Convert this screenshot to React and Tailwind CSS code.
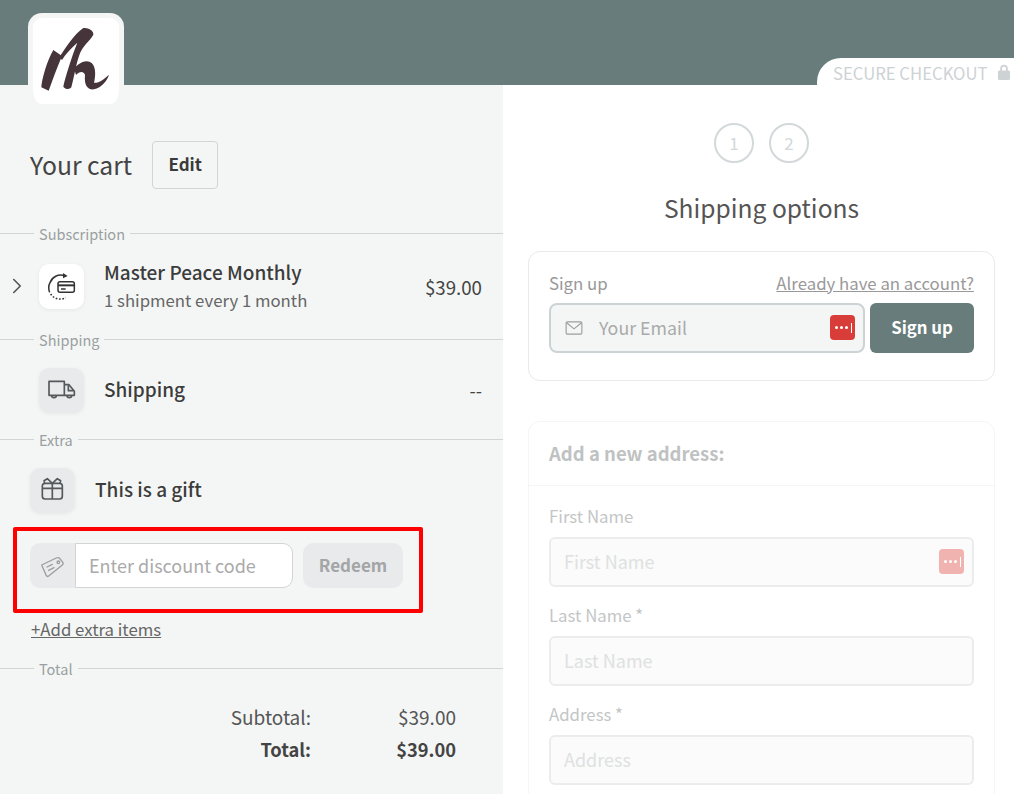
import { ChevronRight } from 'lucide-react';

const fontStack = { fontFamily: '"Noto Sans CJK JP", "Open Sans", sans-serif' };

function SectionLabel({ children }) {
  return (
    <div className="flex items-center h-[20px] text-[14.5px] leading-[20px] text-[#9a9fa1]">
      <div className="w-[34px] h-px bg-[#d3d5d5]" />
      <span className="px-[5px] pt-[2px]">{children}</span>
      <div className="flex-1 h-px bg-[#d3d5d5]" />
    </div>
  );
}

function LastPass({ dim }) {
  return (
    <div className={`absolute right-[8px] top-[10px] w-[25px] h-[25px] rounded-[4px] flex items-center justify-center gap-[2px] pl-[2px] ${dim ? 'bg-[#f0b3af]' : 'bg-[#d93d3a]'}`}>
      <span className="w-[3px] h-[3px] rounded-full bg-white" />
      <span className="w-[3px] h-[3px] rounded-full bg-white" />
      <span className="w-[3px] h-[3px] rounded-full bg-white" />
      <span className="w-px h-[10px] bg-white ml-[1px]" />
    </div>
  );
}

function Logo() {
  return (
    <svg viewBox="99 54 258 258" className="w-[86px] h-[86px]" fill="#46343b">
      <path d="M160 150 L186 168 C172 200 158 240 146 272 L124 262 C126 235 140 185 160 150 Z" />
      <path d="M178 172 C195 145 225 100 250 84 C265 82 282 92 280 104 C268 125 250 135 240 160 C228 190 222 235 214 262 C208 270 196 268 190 260 C195 235 215 170 232 128 C212 145 195 165 186 180 Z" />
      <path d="M222 205 C235 190 255 178 270 186 C288 194 288 225 282 248 C295 250 312 238 327 224 C322 242 305 262 282 268 C262 270 252 255 255 225 C250 212 238 215 228 225 Z" />
    </svg>
  );
}

function CardRepeatIcon() {
  return (
    <svg viewBox="12 12 135 135" className="w-[45px] h-[45px]" fill="none" stroke="#333" strokeWidth="4.5">
      <path d="M88 47 A34 34 0 0 0 45 68 A34 34 0 0 0 44 97" />
      <path d="M47 102 A34 34 0 0 0 92 113" strokeDasharray="5 5" />
      <path d="M84 39 L98 48 L84 55 Z" fill="#333" stroke="none" />
      <rect x="69" y="65" width="49" height="32" rx="6" />
      <path d="M69 76 H118" strokeWidth="6" />
      <path d="M78 87 H92" />
    </svg>
  );
}

function TruckIcon() {
  return (
    <svg viewBox="12 15 135 135" className="w-[45px] h-[45px]" fill="none" stroke="#55595c" strokeWidth="5" strokeLinejoin="round">
      <path d="M42 55 H88 V97 H42 Z" />
      <path d="M88 65 H102 L118 85 V97 H88" />
      <path d="M100 67 V83 H116" />
      <path d="M50 97 A7 7 0 0 0 64 97" />
      <path d="M96 97 A7 7 0 0 0 110 97" />
    </svg>
  );
}

function GiftIcon() {
  return (
    <svg viewBox="6 12 135 135" className="w-[45px] h-[45px]" fill="none" stroke="#55595c" strokeWidth="5" strokeLinejoin="round">
      <rect x="43" y="58" width="60" height="47" rx="8" />
      <path d="M43 73 H103 M73 58 V105" />
      <path d="M73 58 L58 44 L48 50 L50 58 M73 58 L88 44 L98 50 L96 58" />
    </svg>
  );
}

function TagIcon() {
  return (
    <svg viewBox="6 3 135 135" className="w-[45px] h-[45px]" fill="none" stroke="#9b9ea0" strokeWidth="4" strokeLinejoin="round" strokeLinecap="round">
      <path d="M41 69 L85 48 Q91 45 95 49 L105 62 Q107 66 103 69 L62 102 Q58 105 55 101 Z" />
      <circle cx="91" cy="61" r="4" />
      <path d="M57 75 L73 67 M62 85 L78 77" />
    </svg>
  );
}

function MailIcon() {
  return (
    <svg viewBox="0 0 20 16" className="w-[18px] h-[14px]" fill="none" stroke="#9b9ea0" strokeWidth="1.3">
      <rect x="1" y="1" width="18" height="14" rx="1.5" />
      <path d="M1.5 2 L10 9 L18.5 2" />
    </svg>
  );
}

function LockIcon() {
  return (
    <svg viewBox="0 0 12 16" className="w-[12px] h-[16px]" fill="#cdd2d4">
      <path d="M2.2 7 V4.5 A3.8 3.8 0 0 1 9.8 4.5 V7 H8 V4.5 A2 2 0 0 0 4 4.5 V7 Z" />
      <rect x="0" y="6.5" width="12" height="9.5" rx="1.5" />
    </svg>
  );
}

function IconBox({ white, children }) {
  return (
    <div className={`w-[45px] h-[45px] rounded-[10px] shadow-[0_1px_4px_rgba(0,0,0,0.06)] ${white ? 'bg-white' : 'bg-[#e9eaec]'}`}>
      {children}
    </div>
  );
}

function AddressField({ label, lastPass }) {
  return (
    <div className="mb-[17px]">
      <div className="text-[16.8px] leading-[24px] text-[#c3c6c6] mb-[9px] -mt-px">{label}</div>
      <div className="relative h-[50px] rounded-[6px] border-2 border-[#ebeded] bg-[#fafbfa] pl-[13px] pb-[2px] flex items-center text-[18px] text-[#dfe1e1]">
        {label.replace(' *', '')}
        {lastPass && <LastPass dim />}
      </div>
    </div>
  );
}

export default function App() {
  return (
    <div style={fontStack} className="relative w-[1014px] h-[794px] overflow-hidden bg-white">
      <div className="h-[85px] bg-[#677c7b] flex justify-end items-end">
        <div className="w-[197px] h-[27px] bg-white rounded-tl-[24px] flex items-center pl-[16px] gap-[11px] text-[16.7px] leading-none text-[#cdd2d4]">
          <span className="pt-[3px]">SECURE CHECKOUT</span>
          <LockIcon />
        </div>
      </div>

      {/* Logo sits over the header */}
      <div className="absolute left-[28px] top-[13px] w-[96px] h-[91px] rounded-[14px] bg-white border-[5px] border-b-0 border-[#f4f6f5] flex items-center justify-center">
        <Logo />
      </div>

      <div className="flex h-[709px]">
        <div className="w-[503px] bg-[#f4f6f5]">
          <div className="flex items-center pl-[30px] pt-[56px] gap-[20px]">
            <h1 className="text-[24.7px] leading-[46px] text-[#444] pb-[2px]">Your cart</h1>
            <button className="w-[66px] h-[48px] rounded-[4px] border border-[#d3d5d5] text-[17px] font-bold text-[#3a3a3a] pb-[2px]">Edit</button>
          </div>

          <div className="mt-[34px]">
            <SectionLabel>Subscription</SectionLabel>
            <div className="flex items-center h-[86px] pr-[21px]">
              <div className="w-[39px] flex justify-end pr-[9px] text-[#555]">
                <ChevronRight size={26} strokeWidth={1.5} />
              </div>
              <IconBox white><CardRepeatIcon /></IconBox>
              <div className="ml-[20px] flex-1">
                <div className="text-[19px] leading-[26px] pb-[2px] font-medium text-[#3c3c3c]">Master Peace Monthly</div>
                <div className="text-[16.75px] leading-[26px] text-[#666]">1 shipment every 1 month</div>
              </div>
              <div className="text-[18.7px] text-[#444] pt-[2px]">$39.00</div>
            </div>
            <SectionLabel>Shipping</SectionLabel>
            <div className="flex items-center h-[80px] pl-[39px] pr-[21px] pt-[2px]">
              <IconBox><TruckIcon /></IconBox>
              <div className="ml-[20px] flex-1 text-[19px] font-medium text-[#3c3c3c] pb-[2px]">Shipping</div>
              <div className="text-[18px] text-[#444]">--</div>
            </div>
            <SectionLabel>Extra</SectionLabel>
            <div className="flex items-center h-[80px] pl-[30px] pt-[2px]">
              <IconBox><GiftIcon /></IconBox>
              <div className="ml-[20px] text-[19px] font-medium text-[#3c3c3c] pb-[2px]">This is a gift</div>
            </div>
          </div>

          <div className="ml-[13px] -mt-[2px] w-[410px] h-[86px] border-[4px] border-[#ff0000] rounded-[2px] flex items-center pl-[13px] pb-[9px]">
            <div className="w-[45px] h-[45px] bg-[#e9eaec] rounded-l-[10px]">
              <TagIcon />
            </div>
            <div className="w-[218px] h-[45px] bg-white border border-[#d3d5d5] rounded-r-[10px] pl-[13px] flex items-center text-[18px] text-[#aaa]">Enter discount code</div>
            <div className="ml-[10px] w-[100px] h-[45px] bg-[#e9eaec] rounded-[10px] flex items-center justify-center text-[17px] font-bold text-[#a3a5a6] pb-[1px]">Redeem</div>
          </div>

          <a className="block ml-[31px] mt-[4px] text-[16.8px] leading-[24px] text-[#666] underline">+Add extra items</a>

          <div className="mt-[17px]">
            <SectionLabel>Total</SectionLabel>
          </div>
          <div className="mt-[23px] grid grid-cols-[311px_145px] text-[19px] leading-[32px] text-[#555] text-right">
            <div>Subtotal:</div>
            <div>$39.00</div>
            <div className="text-[18.3px] font-bold text-[#444]">Total:</div>
            <div className="text-[18.3px] font-bold text-[#444]">$39.00</div>
          </div>
        </div>

        <div className="flex-1 pl-[25px] pr-[19px]">
          <div className="flex justify-center gap-[15px] mt-[38px]">
            <div className="w-[40px] h-[40px] rounded-full border-2 border-[#d3d8da] flex items-center justify-center text-[17px] text-[#d3d8da]">1</div>
            <div className="w-[40px] h-[40px] rounded-full border-2 border-[#d3d8da] flex items-center justify-center text-[17px] text-[#d3d8da]">2</div>
          </div>
          <h2 className="mt-[24px] text-center text-[24.6px] leading-[40px] text-[#555]">Shipping options</h2>

          <div className="mt-[24px] h-[130px] rounded-[12px] border border-[#e8e9eb] px-[20px] pt-[19px]">
            <div className="flex justify-between text-[16.8px] leading-[24px] text-[#999]">
              <span>Sign up</span>
              <a className="underline">Already have an account?</a>
            </div>
            <div className="flex gap-[5px] mt-[8px]">
              <div className="relative flex-1 h-[50px] rounded-[8px] border-2 border-[#cdd3d5] bg-[#f4f6f5] flex items-center pl-[14px] text-[17.8px] text-[#aaa]">
                <MailIcon />
                <span className="ml-[16px] pb-[2px]">Your Email</span>
                <LastPass />
              </div>
              <button className="w-[104px] h-[50px] rounded-[6px] bg-[#677c7b] text-white text-[16.8px] font-bold">Sign up</button>
            </div>
          </div>

          <div className="mt-[40px] rounded-[12px] border border-[#f4f5f5]">
            <div className="h-[64px] border-b border-[#f4f5f5] px-[20px] flex items-center text-[18.5px] font-bold text-[#bfc2c2]">Add a new address:</div>
            <div className="px-[20px] pt-[19px]">
              <AddressField label="First Name" lastPass />
              <AddressField label="Last Name *" />
              <AddressField label="Address *" />
            </div>
          </div>
        </div>
      </div>
    </div>
  );
}
